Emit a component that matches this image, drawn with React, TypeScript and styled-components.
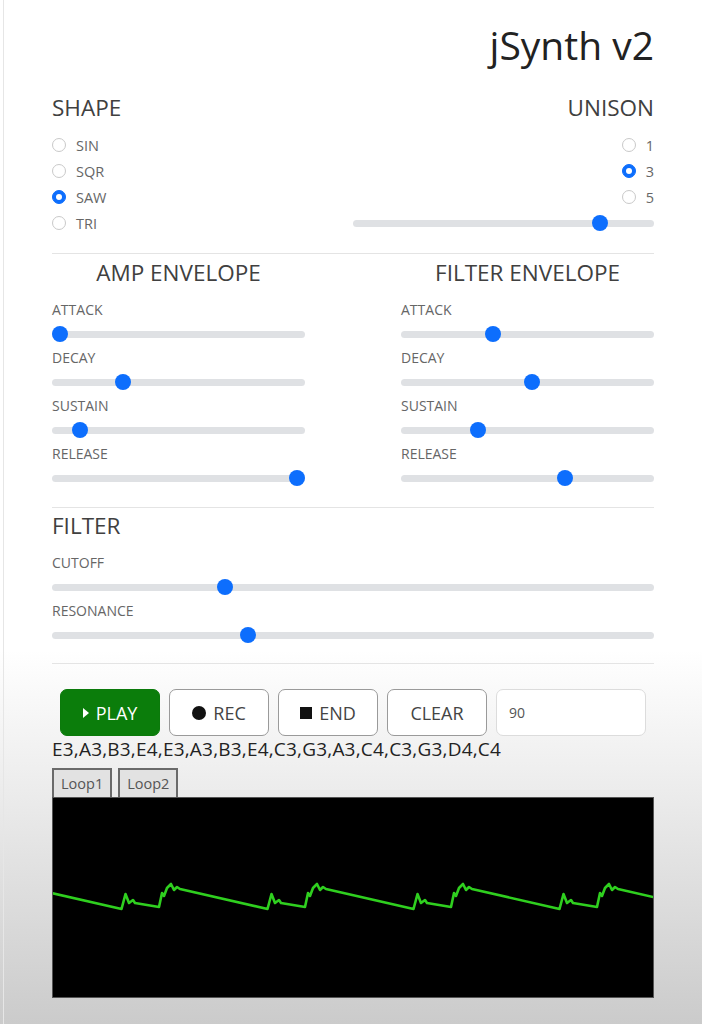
import styled, { createGlobalStyle } from "styled-components";

const GlobalStyle = createGlobalStyle`
  html, body {
    margin: 0;
    padding: 0;
  }
  body {
    font-family: "Open Sans", "Liberation Sans", sans-serif;
    background: #fff;
  }
`;

const Page = styled.div`
  min-height: 1024px;
  padding-left: 3px;
  background: linear-gradient(to bottom, #fff 0, #fff 650px, #ececec 790px, #cbcbcb 1024px);
`;

const Frame = styled.main`
  min-height: 1024px;
  box-sizing: border-box;
  border-left: 1px solid #e6e6e6;
  padding: 20px 48px 0 48px;
`;

const Title = styled.h1`
  margin: 0;
  text-align: right;
  font-size: 39px;
  line-height: 50px;
  font-weight: 500;
  color: #222;
`;

const TopGrid = styled.div`
  display: grid;
  grid-template-columns: 1fr 1fr;
  margin-top: 23px;
`;

const Column = styled.div<{ $align?: "left" | "right" | "center" }>`
  display: flex;
  flex-direction: column;
  text-align: ${(p) => p.$align || "left"};
`;

const Heading = styled.h2<{ $align?: "left" | "right" | "center" }>`
  margin: 0;
  font-size: 22.5px;
  line-height: 30px;
  font-weight: 400;
  color: #404040;
  text-align: ${(p) => p.$align || "left"};
`;

const RadioList = styled.div<{ $right?: boolean }>`
  display: flex;
  flex-direction: column;
  align-items: ${(p) => (p.$right ? "flex-end" : "flex-start")};
  margin-top: 9px;
`;

const RadioRow = styled.label`
  display: flex;
  align-items: center;
  gap: 10px;
  height: 26px;
  font-size: 14.5px;
  color: #666;
`;

const RadioDot = styled.span<{ $checked?: boolean }>`
  position: relative;
  width: 14px;
  height: 14px;
  box-sizing: border-box;
  border-radius: 50%;
  border: 1px solid ${(p) => (p.$checked ? "#0d6efd" : "#c9c9c9")};
  background: ${(p) => (p.$checked ? "#0d6efd" : "#fff")};

  &::after {
    content: "";
    display: ${(p) => (p.$checked ? "block" : "none")};
    position: absolute;
    left: 50%;
    top: 50%;
    width: 6px;
    height: 6px;
    margin: -3px 0 0 -3px;
    border-radius: 50%;
    background: #fff;
  }
`;

const Range = styled.input.attrs({ type: "range", min: 0, max: 1000 })<{ $h?: number }>`
  -webkit-appearance: none;
  appearance: none;
  display: block;
  width: 100%;
  height: ${(p) => p.$h || 24}px;
  margin: 0;
  padding: 0;
  background: transparent;

  &::-webkit-slider-runnable-track {
    height: 7px;
    border-radius: 4px;
    background: #dfe1e4;
  }
  &::-webkit-slider-thumb {
    -webkit-appearance: none;
    appearance: none;
    width: 16px;
    height: 16px;
    margin-top: -4.5px;
    border: 0;
    border-radius: 50%;
    background: #0d6efd;
  }
`;

const Divider = styled.hr<{ $top: number; $bottom: number }>`
  border: 0;
  border-top: 1px solid #e4e4e4;
  height: 0;
  margin: ${(p) => p.$top}px 0 ${(p) => p.$bottom}px;
`;

const EnvGrid = styled.div`
  display: grid;
  grid-template-columns: 1fr 1fr;
  column-gap: 96px;
`;

const Controls = styled.div`
  display: flex;
  flex-direction: column;
  margin-top: 10px;
`;

const ParamLabel = styled.div`
  height: 24px;
  line-height: 24px;
  font-size: 14px;
  color: #666;
`;

const Transport = styled.div`
  display: flex;
  gap: 9px;
  height: 47px;
  margin-top: 25px;
  padding: 0 8px;
`;

const Button = styled.button<{ $primary?: boolean }>`
  width: 100px;
  height: 47px;
  box-sizing: border-box;
  display: flex;
  align-items: center;
  justify-content: center;
  gap: 7px;
  border-radius: 7px;
  border: 1px solid ${(p) => (p.$primary ? "#0b7a0b" : "#9a9a9a")};
  background: ${(p) => (p.$primary ? "#0b7d0b" : "#fff")};
  color: ${(p) => (p.$primary ? "#fff" : "#444")};
  font-family: "Open Sans", "Liberation Sans", sans-serif;
  font-size: 18px;
  padding: 0;
`;

const PlayIcon = styled.span`
  width: 0;
  height: 0;
  border-top: 5.5px solid transparent;
  border-bottom: 5.5px solid transparent;
  border-left: 6px solid #fff;
`;

const RecIcon = styled.span`
  width: 14px;
  height: 14px;
  border-radius: 50%;
  background: #111;
`;

const StopIcon = styled.span`
  width: 12px;
  height: 12px;
  background: #111;
`;

const TempoInput = styled.input`
  flex: 1;
  min-width: 0;
  height: 47px;
  box-sizing: border-box;
  border: 1px solid #dcdcdc;
  border-radius: 7px;
  background: #fff;
  padding: 0 12px;
  font-family: "Open Sans", "Liberation Sans", sans-serif;
  font-size: 14px;
  color: #555;
`;

const Notes = styled.div`
  margin-top: 1px;
  line-height: 24px;
  font-size: 19px;
  letter-spacing: 0.2px;
  font-weight: 500;
  color: #222;
`;

const Loops = styled.div`
  display: flex;
  gap: 6px;
  margin-top: 7px;
`;

const LoopButton = styled.button`
  height: 29px;
  box-sizing: border-box;
  padding: 0 7px;
  border: 2px solid #6a6a6a;
  border-bottom: 0;
  background: #e2e2e2;
  color: #555;
  font-family: "Open Sans", "Liberation Sans", sans-serif;
  font-size: 14.5px;
`;

const Scope = styled.div`
  height: 201px;
  box-sizing: border-box;
  border: 1px solid #555;
  background: #000;
`;

const ScopeSvg = styled.svg`
  display: block;
  width: 100%;
  height: 100%;
`;

// one cycle of the saw wave, relative to the plateau after a peak
const cycle: [number, number][] = [
  [0, 91], [87.5, 111], [91.5, 96], [95, 105], [99, 102], [101, 105],
  [125, 109], [128, 95], [130, 98], [133, 90], [137, 86], [140, 92], [143, 89],
];

function wavePoints() {
  const pts: string[] = [];
  for (let start = -19; start < 620; start += 146) {
    cycle.forEach(([x, y]) => pts.push(`${(start + x).toFixed(1)},${y}`));
  }
  return pts.join(" ");
}

const toVal = (v: number) => Math.round(v * 1000);

function Slider({ label, value }: { label: string; value: number }) {
  return (
    <>
      <ParamLabel>{label}</ParamLabel>
      <Range defaultValue={toVal(value)} />
    </>
  );
}

const shapes = ["SIN", "SQR", "SAW", "TRI"];
const unison = ["1", "3", "5"];

function App() {
  return (
    <Page>
      <GlobalStyle />
      <Frame>
        <Title>jSynth v2</Title>

        <TopGrid>
          <Column>
            <Heading>SHAPE</Heading>
            <RadioList>
              {shapes.map((s) => (
                <RadioRow key={s}>
                  <RadioDot $checked={s === "SAW"} />
                  {s}
                </RadioRow>
              ))}
            </RadioList>
          </Column>
          <Column $align="right">
            <Heading $align="right">UNISON</Heading>
            <RadioList $right>
              {unison.map((u) => (
                <RadioRow key={u}>
                  <RadioDot $checked={u === "3"} />
                  {u}
                </RadioRow>
              ))}
            </RadioList>
            <Range $h={26} defaultValue={toVal(0.839)} />
          </Column>
        </TopGrid>

        <Divider $top={17} $bottom={4} />

        <EnvGrid>
          <Column>
            <Heading $align="center">AMP ENVELOPE</Heading>
            <Controls>
              <Slider label="ATTACK" value={0} />
              <Slider label="DECAY" value={0.266} />
              <Slider label="SUSTAIN" value={0.084} />
              <Slider label="RELEASE" value={1} />
            </Controls>
          </Column>
          <Column>
            <Heading $align="center">FILTER ENVELOPE</Heading>
            <Controls>
              <Slider label="ATTACK" value={0.354} />
              <Slider label="DECAY" value={0.519} />
              <Slider label="SUSTAIN" value={0.291} />
              <Slider label="RELEASE" value={0.658} />
            </Controls>
          </Column>
        </EnvGrid>

        <Divider $top={17} $bottom={3} />

        <Heading>FILTER</Heading>
        <Controls>
          <Slider label="CUTOFF" value={0.282} />
          <Slider label="RESONANCE" value={0.321} />
        </Controls>

        <Divider $top={16} $bottom={0} />

        <Transport>
          <Button $primary>
            <PlayIcon />
            PLAY
          </Button>
          <Button>
            <RecIcon />
            REC
          </Button>
          <Button>
            <StopIcon />
            END
          </Button>
          <Button>CLEAR</Button>
          <TempoInput defaultValue="90" />
        </Transport>

        <Notes>E3,A3,B3,E4,E3,A3,B3,E4,C3,G3,A3,C4,C3,G3,D4,C4</Notes>

        <Loops>
          <LoopButton>Loop1</LoopButton>
          <LoopButton>Loop2</LoopButton>
        </Loops>

        <Scope>
          <ScopeSvg viewBox="0 0 600 199" preserveAspectRatio="none">
            <polyline
              points={wavePoints()}
              fill="none"
              stroke="#2fcf1f"
              strokeWidth="2.6"
              strokeLinejoin="round"
            />
          </ScopeSvg>
        </Scope>
      </Frame>
    </Page>
  );
}

export default App;
